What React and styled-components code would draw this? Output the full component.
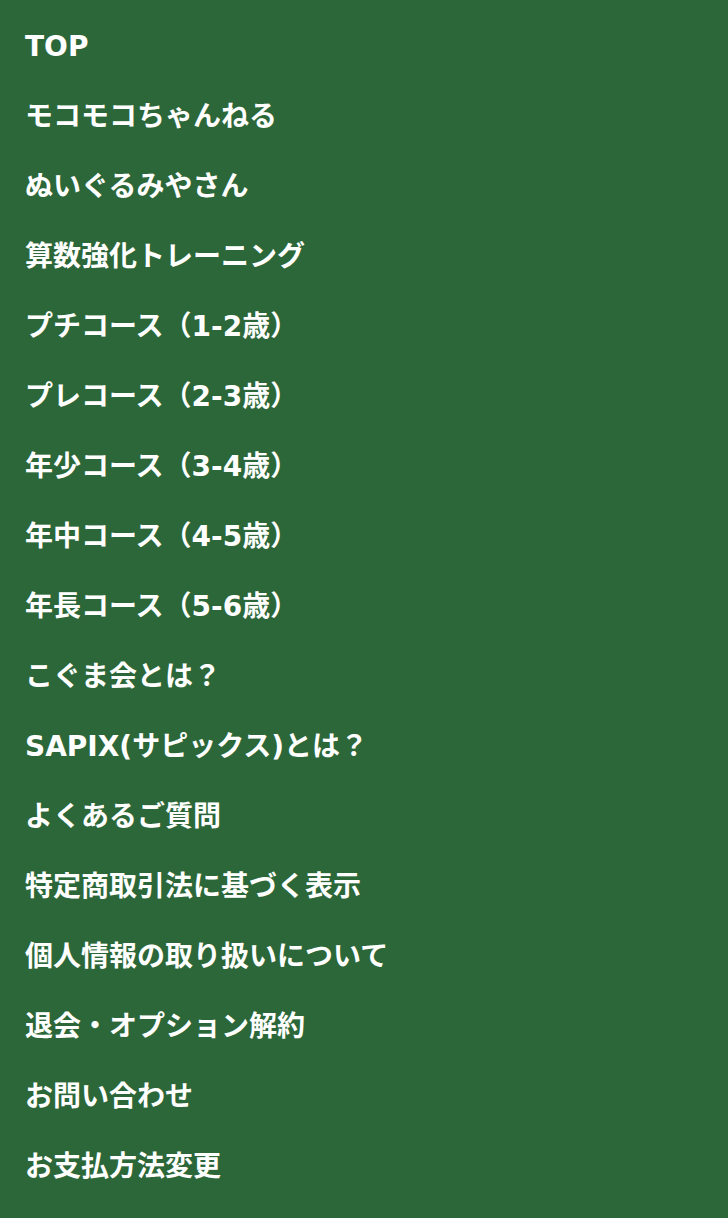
import React from 'react';
import styled, { createGlobalStyle } from 'styled-components';

const GlobalStyle = createGlobalStyle`
    html, body {
        margin: 0;
        padding: 0;
        background: #2c6739;
    }
`;

const Menu = styled.nav`
    background: #2c6739;
    min-height: 1218px;
    padding: 12px 0 16px;
    box-sizing: border-box;
    font-family: "DejaVu Sans", "Noto Sans CJK JP", sans-serif;
`;

const List = styled.ul`
    list-style: none;
    margin: 0;
    padding: 0;
`;

const Item = styled.li`
    a {
        display: block;
        padding: 0 25px;
        height: 70px;
        line-height: 70px;
        font-size: 28px;
        font-weight: 700;
        color: #fff;
        text-decoration: none;
        white-space: nowrap;
    }
`;

const items = [
    'TOP',
    'モコモコちゃんねる',
    'ぬいぐるみやさん',
    '算数強化トレーニング',
    'プチコース（1-2歳）',
    'プレコース（2-3歳）',
    '年少コース（3-4歳）',
    '年中コース（4-5歳）',
    '年長コース（5-6歳）',
    'こぐま会とは？',
    'SAPIX(サピックス)とは？',
    'よくあるご質問',
    '特定商取引法に基づく表示',
    '個人情報の取り扱いについて',
    '退会・オプション解約',
    'お問い合わせ',
    'お支払方法変更',
];

export default function App() {
    return (
        <>
            <GlobalStyle />
            <Menu>
                <List>
                    {items.map((item, i) => (
                        <Item key={i}>
                            <a href="#">{item}</a>
                        </Item>
                    ))}
                </List>
            </Menu>
        </>
    );
}
